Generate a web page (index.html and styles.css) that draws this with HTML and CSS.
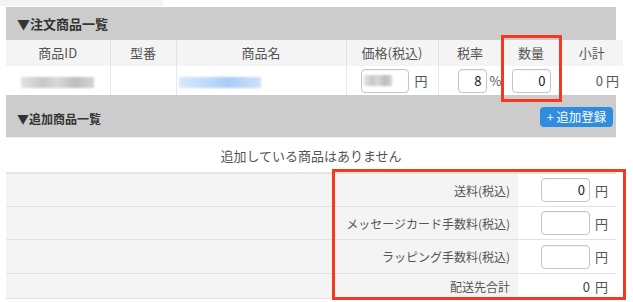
FILE: index.html
```html
<!DOCTYPE html>
<html lang="ja">
<head>
<meta charset="utf-8">
<link rel="stylesheet" href="styles.css">
</head>
<body>
<div class="page">
  <div class="top-strip"><div class="top-strip-cell"></div></div>
  <div class="section-head head1">▼注文商品一覧</div>
  <table class="items">
    <colgroup>
      <col style="width:104px"><col style="width:66px"><col style="width:170px"><col style="width:92px"><col style="width:64px"><col style="width:58px"><col style="width:63px">
    </colgroup>
    <thead>
      <tr><th>商品ID</th><th>型番</th><th>商品名</th><th>価格(税込)</th><th>税率</th><th>数量</th><th>小計</th></tr>
    </thead>
    <tbody>
      <tr>
        <td class="c"><span class="blur gray w73"></span></td>
        <td></td>
        <td class="l"><span class="blur blue w82"></span></td>
        <td class="r price"><span class="inp w48"><span class="blur gray w28 inner"></span></span><span class="unit">円</span></td>
        <td class="r tax"><span class="inp w29 num">8</span><span class="unit pct">%</span></td>
        <td class="c"><span class="inp w39 num">0</span></td>
        <td class="r sub">0 円</td>
      </tr>
    </tbody>
  </table>
  <div class="section-head head2">
    <span>▼追加商品一覧</span>
    <span class="btn">+ 追加登録</span>
  </div>
  <div class="empty">追加している商品はありません</div>
  <div class="fees">
    <div class="fee-row h33"><div class="label">送料(税込)</div><div class="value"><span class="inp w49 num">0</span><span class="unit">円</span></div></div>
    <div class="fee-row h33"><div class="label">メッセージカード手数料(税込)</div><div class="value"><span class="inp w49"></span><span class="unit">円</span></div></div>
    <div class="fee-row h34"><div class="label">ラッピング手数料(税込)</div><div class="value"><span class="inp w49"></span><span class="unit">円</span></div></div>
    <div class="fee-row h25 last"><div class="label">配送先合計</div><div class="value"><span class="total">0</span><span class="unit">円</span></div></div>
  </div>
  <div class="mark mark1"></div>
  <div class="mark mark2"></div>
</div>
</body>
</html>
```
FILE: styles.css
```css
* { box-sizing: border-box; }
html, body { margin: 0; padding: 0; background: #fff; }
body {
  font-family: "Noto Sans CJK JP", "Noto Sans", sans-serif;
  font-size: 13px;
  color: #555;
  width: 633px;
  height: 302px;
  overflow: hidden;
}
.page { position: relative; width: 633px; height: 302px; }

.top-strip { height: 7px; }
.top-strip-cell { width: 163px; height: 6px; background: #f4f4f4; }

.section-head {
  margin-left: 6px;
  width: 610px;
  background: #cccccc;
  font-weight: bold;
  color: #333;
  display: flex;
  align-items: center;
  padding-left: 11px;
}
.head1 { height: 33px; font-size: 13px; }
.head2 {
  height: 42px;
  font-size: 12px;
  justify-content: space-between;
  padding-right: 3px;
  padding-top: 4px;
}

.items {
  margin-left: 6px;
  width: 617px;
  border-collapse: collapse;
  table-layout: fixed;
}
.items th {
  background: #f4f4f4;
  font-weight: normal;
  height: 26px;
  padding: 0;
  border-left: 1px solid #e2e2e2;
  color: #555;
  line-height: 26px;
}
.items th:first-child { border-left: none; }
.items td {
  height: 29px;
  padding: 0;
  border-left: 1px solid #e8e8e8;
  vertical-align: middle;
  white-space: nowrap;
}
.items td:first-child { border-left: none; }
.items td.c { text-align: center; }
.items td.l { text-align: left; padding-left: 2px; }
.items td.r { text-align: right; }
.items td.price { padding-right: 10px; }
.items td.tax { padding-right: 0; }
.items td.sub { padding-right: 4px; }

.inp {
  display: inline-block;
  height: 24px;
  border: 1px solid #c4c4c4;
  border-radius: 4px;
  background: #fff;
  vertical-align: middle;
  line-height: 22px;
  padding-right: 4px;
  text-align: right;
  color: #222;
  font-size: 13px;
  box-shadow: inset 0 1px 1px rgba(0,0,0,0.04);
}
.w48 { width: 48px; }
.w29 { width: 29px; }
.w39 { width: 39px; }
.w49 { width: 49px; }
.unit { display: inline-block; vertical-align: middle; margin-left: 5px; color: #555; }
.pct { margin-left: 3px; }

.blur {
  display: inline-block;
  height: 11px;
  vertical-align: middle;
  filter: blur(1px);
}
.blur.gray { background: linear-gradient(90deg, #e2e2e2, #c8c8c8 30%, #d8d8d8 50%, #bdbdbd 75%, #d4d4d4); }
.blur.blue { background: linear-gradient(90deg, #d9e8fb, #bcd7f8 40%, #a9cbf6 60%, #cfe2fb); }
.w73 { width: 73px; }
.w82 { width: 82px; }
.w28 { width: 28px; }
.inner { margin-right: 12px; margin-top: 5px; vertical-align: top; }

.btn {
  display: inline-flex;
  align-items: center;
  justify-content: center;
  width: 73px;
  height: 20px;
  margin-top: -3px;
  background: #2f8de0;
  color: #fff;
  border-radius: 4px;
  font-weight: normal;
  font-size: 12.5px;
}

.empty {
  margin-left: 6px;
  width: 610px;
  height: 35px;
  border-top: 1px solid #eeeeee;
  display: flex;
  align-items: center;
  justify-content: center;
  color: #555;
}

.fees {
  margin-left: 6px;
  width: 610px;
  border-top: 2px solid #e4e4e4;
}
.fee-row {
  display: flex;
  border-bottom: 1px solid #e2e2e2;
}
.h33 { height: 33px; }
.h34 { height: 34px; }
.h25 { height: 25px; }
.fee-row .label {
  width: 512px;
  background: #f4f4f4;
  display: flex;
  align-items: center;
  justify-content: flex-end;
  padding-right: 8px;
  color: #555;
  font-size: 12px;
}
.fee-row .value {
  flex: 1;
  display: flex;
  align-items: center;
  padding-left: 23px;
}
.total { display: inline-block; width: 49px; text-align: right; color: #444; }

.mark {
  position: absolute;
  border: 3px solid #f43a1e;
}
.mark1 { left: 501px; top: 35px; width: 61px; height: 67px; }
.mark2 { left: 332px; top: 169px; width: 294px; height: 131px; }
```
